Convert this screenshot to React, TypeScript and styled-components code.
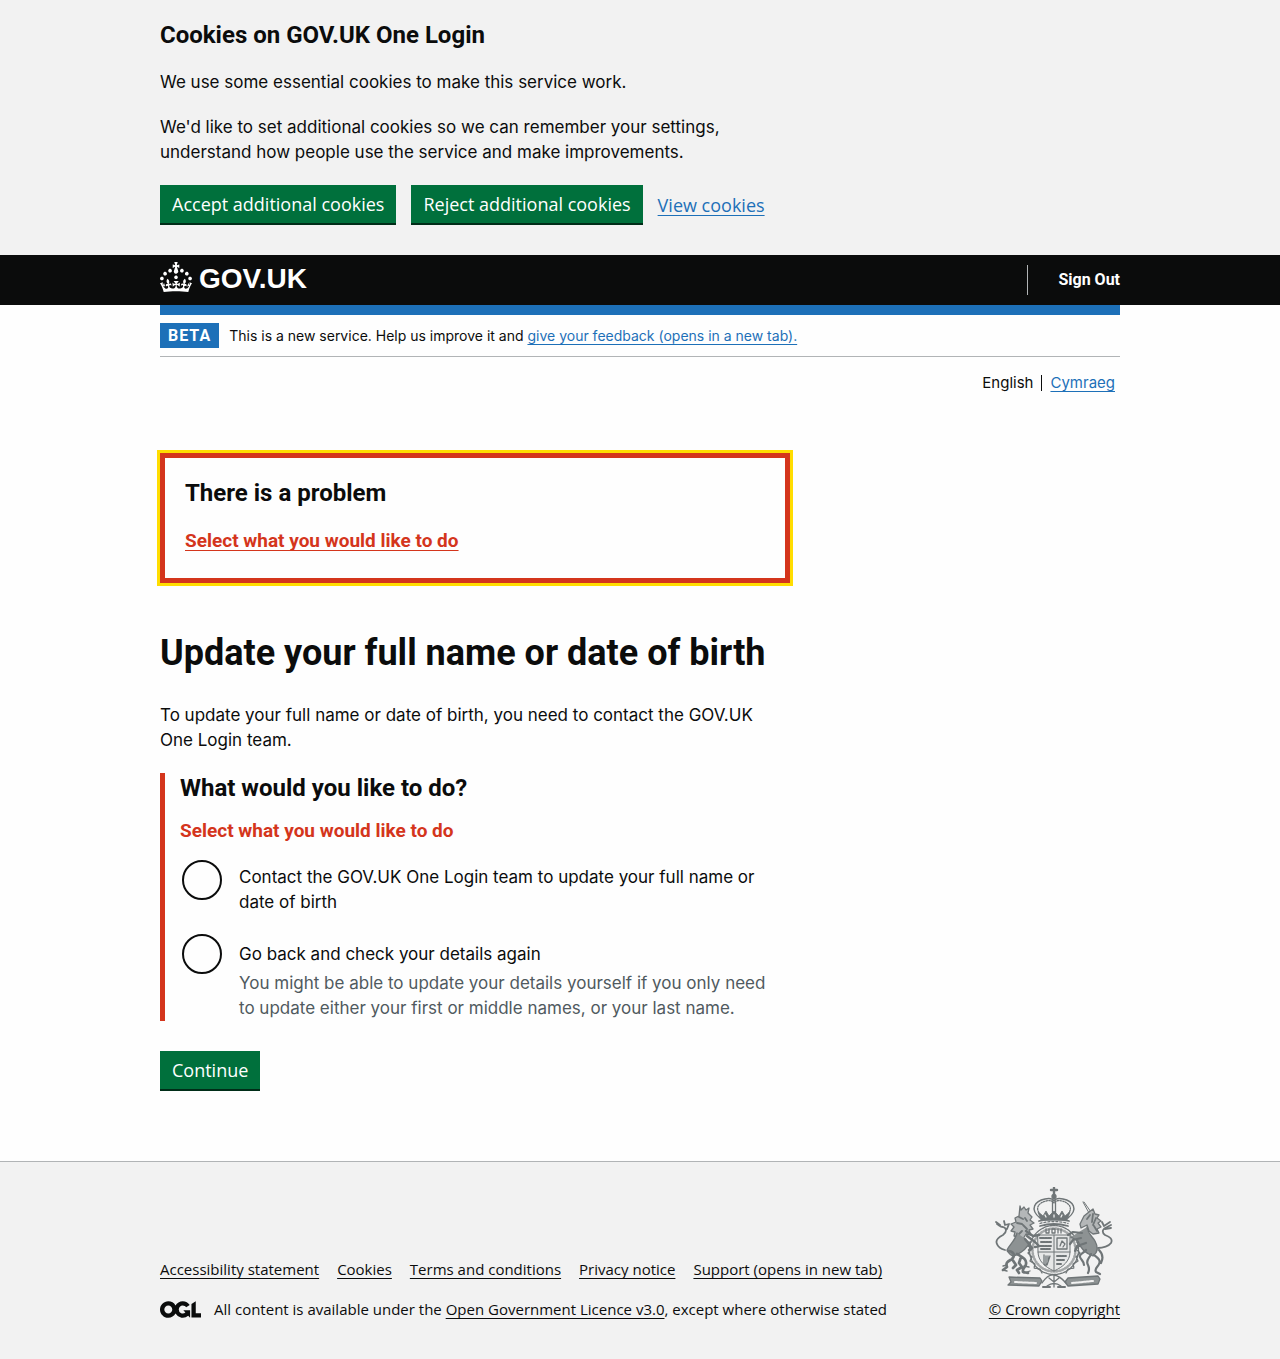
import React from "react";
import styled, { createGlobalStyle } from "styled-components";

const c = {
  ink: "#0b0c0c",
  blue: "#1d70b8",
  green: "#00703c",
  red: "#d4351c",
  yellow: "#ffdd00",
  grey: "#f2f2f2",
  border: "#b1b4b6",
  hint: "#505a5f",
  page: "#fefefe",
};

const boldFamily = `Roboto, "Liberation Sans", Arial, sans-serif`;
const actionFamily = `"Open Sans", "Liberation Sans", Arial, sans-serif`;

const GlobalStyle = createGlobalStyle`
  *, *::before, *::after { box-sizing: border-box; }
  body {
    margin: 0;
    background: ${c.grey};
    color: ${c.ink};
    font-family: Inter, "Liberation Sans", Arial, sans-serif;
    font-size: 17px;
    line-height: 25px;
  }
  h1, h2, p, ul, fieldset, legend { margin: 0; padding: 0; border: 0; }
  ul { list-style: none; }
`;

const Container = styled.div`
  max-width: 960px;
  margin: 0 auto;
`;

const Column = styled.div`
  max-width: 630px;
`;

const Link = styled.a<{ $tone?: "ink" | "inherit" }>`
  color: ${(p) => (p.$tone === "ink" ? c.ink : p.$tone === "inherit" ? "inherit" : c.blue)};
  text-decoration: underline;
  text-decoration-thickness: 1px;
  text-decoration-skip-ink: none;
  text-underline-offset: 3px;
`;

const Heading = styled.h2`
  font: 700 24px/30px ${boldFamily};
`;

const Title = styled.h1`
  font: 700 36px/40px ${boldFamily};
`;

const Button = styled.button`
  padding: 7px 12px 6px;
  border: 0;
  border-bottom: 2px solid #002d18;
  border-radius: 0;
  background: ${c.green};
  color: #fff;
  font: inherit;
  cursor: pointer;
`;

const CookieBanner = styled.section`
  padding: 20px 0 30px;
`;

const CookieText = styled(Column)`
  display: flex;
  flex-direction: column;
  gap: 20px;
  margin-bottom: 20px;
`;

const ButtonRow = styled.div`
  display: flex;
  align-items: center;
  gap: 15px;
  font: 18px/25px ${actionFamily};
`;

const Header = styled.header`
  background: ${c.ink};
  color: #fff;
`;

const HeaderRow = styled(Container)`
  display: flex;
  align-items: center;
  justify-content: space-between;
  height: 50px;
`;

const Logo = styled.a`
  display: flex;
  align-items: flex-start;
  gap: 7px;
  padding-bottom: 2px;
  color: #fff;
  text-decoration: none;
  font: 700 28px/34px "Liberation Sans", Arial, sans-serif;
`;

const HeaderNav = styled.nav`
  padding-left: 30px;
  border-left: 1px solid ${c.border};
  font: 700 16px/30px ${boldFamily};
`;

const SignOut = styled.a`
  color: #fff;
  text-decoration: none;
`;

const Page = styled.div`
  background: ${c.page};
  border-bottom: 1px solid ${c.border};
`;

const PhaseBanner = styled.div`
  display: flex;
  align-items: center;
  gap: 10px;
  padding: 8px 0;
  border-top: 10px solid ${c.blue};
  border-bottom: 1px solid ${c.border};
  font-size: 14px;
`;

const Tag = styled.strong`
  padding: 0 8px;
  background: ${c.blue};
  color: #fff;
  font: 700 16px/25px ${boldFamily};
  letter-spacing: 1px;
`;

const Languages = styled.ul`
  display: flex;
  justify-content: flex-end;
  padding: 18px 5px 0 0;
  font-size: 15px;
  line-height: 16px;
`;

const Language = styled.li`
  & + & {
    margin-left: 8px;
    padding-left: 8px;
    border-left: 1px solid ${c.ink};
  }
`;

const Main = styled(Column).attrs({ as: "main" })`
  padding: 62px 0 70px;
`;

const ErrorSummary = styled.div`
  display: flex;
  flex-direction: column;
  gap: 20px;
  margin-bottom: 50px;
  padding: 20px 20px 25px;
  border: 5px solid ${c.red};
  outline: 3px solid ${c.yellow};
`;

const ErrorList = styled.ul`
  color: ${c.red};
  font: 700 19px/25px ${boldFamily};
`;

const Intro = styled.p`
  margin: 30px 0 20px;
`;

const FormGroup = styled.div`
  margin-bottom: 30px;
  padding-left: 15px;
  border-left: 5px solid ${c.red};
`;

const ErrorMessage = styled.p`
  margin: 15px 0;
  color: ${c.red};
  font: 700 19px/25px ${boldFamily};
`;

const Radios = styled.div`
  display: flex;
  flex-direction: column;
  gap: 10px;
`;

const RadioItem = styled.div`
  display: grid;
  grid-template-columns: 44px 1fr;
  column-gap: 15px;
`;

const Radio = styled.input`
  appearance: none;
  width: 40px;
  height: 40px;
  margin: 2px;
  border: 2px solid ${c.ink};
  border-radius: 50%;
  background: transparent;
  cursor: pointer;
  &:checked {
    background: radial-gradient(${c.ink} 10px, transparent 11px);
  }
`;

const RadioLabel = styled.label`
  align-self: center;
  padding: 7px 0;
`;

const Hint = styled.div`
  grid-column: 2;
  margin-top: -5px;
  padding-right: 15px;
  color: ${c.hint};
`;

const Footer = styled.footer`
  padding: 25px 0 40px;
  font: 15px/20px ${actionFamily};
`;

const FooterRow = styled(Container)`
  display: flex;
  align-items: flex-end;
  justify-content: space-between;
`;

const FooterLinks = styled.ul`
  display: flex;
  flex-wrap: wrap;
  gap: 18px;
  margin-bottom: 20px;
`;

const Licence = styled.div`
  display: flex;
  align-items: center;
  gap: 13px;
`;

const Copyright = styled.div`
  display: flex;
  flex-direction: column;
  align-items: center;
  gap: 10px;
`;

const Crown = () => (
  <svg width="32" height="30" viewBox="0 0 32 30" fill="currentColor" aria-hidden="true">
    <path d="M22.6 10.4c-1 .4-2-.1-2.4-1-.4-.9.1-2 1-2.4.9-.4 2 .1 2.4 1s-.1 2-1 2.4m-5.9 6.7c-.9.4-2-.1-2.4-1-.4-.9.1-2 1-2.4.9-.4 2 .1 2.4 1s-.1 2-1 2.4m10.8-3.7c-1 .4-2-.1-2.4-1-.4-.9.1-2 1-2.4.9-.4 2 .1 2.4 1s0 2-1 2.4m3.3 4.8c-1 .4-2-.1-2.4-1-.4-.9.1-2 1-2.4.9-.4 2 .1 2.4 1s-.1 2-1 2.4M17 4.7l2.3 1.2V2.5l-2.3.7-.2-.2.9-3h-3.4l.9 3-.2.2c-.1.1-2.3-.7-2.3-.7v3.4L15 4.7c.1.1.1.2.2.2l-1.3 4c-.1.2-.1.4-.1.6 0 1.1.8 2 1.9 2.2h.7c1-.2 1.9-1.1 1.9-2.1 0-.2 0-.4-.1-.6l-1.3-4c-.1-.2 0-.2.1-.3m-7.6 5.7c.9.4 2-.1 2.4-1 .4-.9-.1-2-1-2.4-.9-.4-2 .1-2.4 1s0 2 1 2.4m-5 3c.9.4 2-.1 2.4-1 .4-.9-.1-2-1-2.4-.9-.4-2 .1-2.4 1s.1 2 1 2.4m-3.2 4.8c.9.4 2-.1 2.4-1 .4-.9-.1-2-1-2.4-.9-.4-2 .1-2.4 1s0 2 1 2.4m14.8 11c4.4 0 8.6.3 12.3.8 1.1-4.5 2.4-7 3.7-8.8l-2.5-.9c.2 1.3.3 1.9 0 2.7-.4-.4-.8-1.1-1.1-2.3l-1.2 4c.7-.5 1.3-.8 2-.9-1.1 2.5-2.6 3.1-3.5 3-1.1-.2-1.7-1.2-1.5-2.1.3-1.2 1.5-1.5 2.1-.1 1.1-2.3-.8-3-2-2.3 1.9-1.9 2.1-3.5.6-5.6-2.1 1.6-2.1 3.2-1.2 5.5-1.2-1.4-3.2-.6-2.5 1.6.9-1.4 2.1-.5 1.9.8-.2 1.1-1.7 2.1-3.5 1.9-2.7-.2-2.9-2.1-2.9-3.6.7-.1 1.9.5 2.9 1.9l.4-4.3c-1.1 1.1-2.1 1.4-3.2 1.4.4-1.2 2.1-3 2.1-3h-5.4s1.7 1.9 2.1 3c-1.1 0-2.1-.2-3.2-1.4l.4 4.3c1-1.4 2.2-2 2.9-1.9-.1 1.5-.2 3.4-2.9 3.6-1.9.2-3.4-.8-3.5-1.9-.2-1.3 1-2.2 1.9-.8.7-2.3-1.2-3-2.5-1.6.9-2.2.9-3.9-1.2-5.5-1.5 2-1.3 3.7.6 5.6-1.2-.7-3.1 0-2 2.3.6-1.4 1.8-1.1 2.1.1.2.9-.3 1.9-1.5 2.1-.9.2-2.4-.5-3.5-3 .6 0 1.2.3 2 .9l-1.2-4c-.3 1.1-.7 1.9-1.1 2.3-.3-.8-.2-1.4 0-2.7l-2.9.9C1.3 23 2.6 25.5 3.7 30c3.7-.5 7.9-.8 12.3-.8" />
  </svg>
);

const OglLogo = () => (
  <svg width="41" height="17" viewBox="0 0 483.2 195.7" fill="currentColor" aria-hidden="true">
    <path d="M421.5 142.8V.1l-50.7 32.3v161.1h112.4v-50.7zm-122.3-9.6A47.12 47.12 0 0 1 221 97.8c0-26 21.1-47.1 47.1-47.1 16.7 0 31.4 8.7 39.7 21.8l42.7-27.2A97.63 97.63 0 0 0 268.1 0c-36.5 0-68.3 20.1-85.1 49.7A98 98 0 0 0 97.8 0C43.9 0 0 43.9 0 97.8s43.9 97.8 97.8 97.8c36.5 0 68.3-20.1 85.1-49.7a97.76 97.76 0 0 0 149.6 25.4l19.4 22.2h3v-87.8h-80l24.3 27.5zM97.8 145c-26 0-47.1-21.1-47.1-47.1s21.1-47.1 47.1-47.1 47.1 21.1 47.1 47.1S123.8 145 97.8 145" />
  </svg>
);

const Crest = () => (
  <svg width="118" height="102" viewBox="0 0 118 102" fill="none" stroke="#6f7577" strokeWidth="1.3" strokeLinecap="round" strokeLinejoin="round" aria-hidden="true">
    {/* royal crown */}
    <path d="M59 .8v7M56 3h6" strokeWidth="2.4" />
    <circle cx="59" cy="9.5" r="2" fill="#6f7577" />
    <path d="M45 31C34 22 40 14 50 12c5-1 8 0 9 2 1-2 4-3 9-2 10 2 16 10 5 19" strokeWidth="1.4" />
    <path d="M47 29C39 22 43 16 51 14c4-1 7 0 8 2 1-2 4-3 8-2 8 2 12 8 4 15" strokeDasharray="1.3 1.3" />
    <path d="M57.5 14v13M60.5 14v13" />
    <path d="M46 33l-3-8 5 4 3-5 3 5 5-5 5 5 3-5 3 5 5-4-3 8z" fill="#6f7577" strokeWidth=".8" />
    <path d="M50 28l1 2M67 28l-1 2M59 28v2" stroke="#f2f2f2" />
    <path d="M44 34q15-4 30 0M45 39q14-4 28 0" strokeWidth="1.8" />
    <path d="M45 36.5q14-4 28 0" strokeDasharray="2 2" />
    {/* garter */}
    <circle cx="59" cy="63" r="24.5" strokeDasharray="2 1" strokeWidth="1.3" />
    <circle cx="59" cy="63" r="21.5" strokeDasharray="1 2" strokeWidth="2.6" opacity=".6" />
    <path d="M51 42v4h3v-4M57 42v4h3v-4zM63 42v4M66 42v4" />
    {/* quartered shield */}
    <path d="M43 48h32v17c0 9-7 15-16 19-9-4-16-10-16-19z" fill="#e6e7e7" strokeWidth="1" />
    <path d="M59 48v36M43 65h32" strokeWidth="1" />
    <path d="M45 51h11M46 55h10M45 59h11M46 62h9M62 69h9M62 73h8M62 77h4" strokeDasharray="4 1 2 1" strokeWidth="2" />
    <path d="M62 51h10v11h-10zM65 59l2-5 3 3-2 3M49 68v8q0 3 3 2l3-9M51 69v8M53 69v6" />
    <path d="M36 55l-3 4 4 3-4 4 4 4-2 4 5 3-1 4 6 1 2 4M82 55l3 4-4 3 4 4-4 4 2 4-5 3 1 4-6 1-2 4" strokeDasharray="2 1" />
    {/* lion */}
    <path d="M25 19l1 4 3-3 2 3 3-2-1 5 4 4-2 3 4 3-4 2 3 4-4 1 2 5-5-1-3 5-5-2-4-1 1-4-4-1 3-4-3-3 5-2-1-4 4-2z" fill="#b4b7b8" />
    <path d="M24 30l4 2M22 36l5 1M28 38l4 4M30 31l2 3M27 44l-3 3" strokeWidth="1.8" />
    <path d="M22 46c-2 8-7 11-10 17 2 4 5 6 7 6 7-3 13-7 16-14" fill="#8d9293" />
    <path d="M31 44l7 5 6-1M32 49l8 6 4 4-4 1M30 52l7 9-3 2" strokeWidth="2.4" />
    <path d="M10 63c-4-1-7-3-8-6-2-4 2-7 6-9 4-3 4-7 0-8-3 0-4-2-6-3M9 34l1 4 4-1-2 5M1 35l4 3" strokeWidth="1.8" />
    <path d="M13 64c5 0 8 4 4 8-3 2-7 3-5 8l-4 3M22 67c5 3 10 5 9 10 0 3-4 4-3 8l5 1M17 72l4 6-3 3M26 70l-2 6 3 4-5 3 2 3" strokeWidth="2.7" />
    <path d="M12 84l-4-1M8 79l4-1M29 86l6-2M34 80l-5-1" />
    {/* unicorn */}
    <path d="M88 15l6 11M89 15l7 10" strokeWidth="1" />
    <path d="M85 37l4-8 5-4 4-3 2 5 4 1-2 3 4 3-3 2 3 4-4 2 2 4-6 1-4-3-2-6-6 3z" fill="#b4b7b8" />
    <path d="M95 28l-3 4M98 27l-1 8M101 31l-3 7M99 39l3 5" strokeWidth="1.8" />
    <path d="M92 40c1 7 5 9 8 14 4 7 2 12-2 15-8-3-13-8-15-15l-7-4" fill="#8d9293" />
    <path d="M87 46l-9-1-5 3M86 51l-8 2-3 4M91 56l-9 3-2 5" strokeWidth="2.2" />
    <path d="M103 61c5 0 11-2 13-5 2-4-1-6-6-8-4-3-2-7 2-8l4-2M107 35l2 4 6-4M110 42l6-1" strokeWidth="1.8" />
    <path d="M99 68c4 3 7 5 5 9-1 3-5 4-3 8l4 2M91 63c-3 4-7 4-6 7 1 3 4 4 4 8M96 67c-1 4-6 6-3 11 1 3 2 4 0 8M104 63c4 4 4 9 2 13" strokeWidth="2.2" />
    {/* motto scroll */}
    <path d="M14 90l31 1 2 3-3 5-31-1 3-3z" fill="#8d9293" />
    <path d="M73 91l30-2 2 3-2 5-30 2-3-4z" fill="#8d9293" />
    <path d="M20 95l21 1M77 96l21-2" stroke="#f2f2f2" strokeDasharray="2 1" strokeWidth="2" />
    <path d="M47 96q6-9 12-8t12 8M52 99q7-5 14 0M59 88v12M54 91l5 4 5-4" />
    <path d="M48 100h7M63 100h7" strokeWidth="2" />
  </svg>
);

const footerLinks = [
  "Accessibility statement",
  "Cookies",
  "Terms and conditions",
  "Privacy notice",
  "Support (opens in new tab)",
];

export default function App() {
  return (
    <>
      <GlobalStyle />
      <CookieBanner aria-label="Cookies on GOV.UK One Login">
        <Container>
          <CookieText>
            <Heading>Cookies on GOV.UK One Login</Heading>
            <p>We use some essential cookies to make this service work.</p>
            <p>
              We'd like to set additional cookies so we can remember your settings, understand how
              people use the service and make improvements.
            </p>
          </CookieText>
          <ButtonRow>
            <Button type="button">Accept additional cookies</Button>
            <Button type="button">Reject additional cookies</Button>
            <Link href="#cookies">View cookies</Link>
          </ButtonRow>
        </Container>
      </CookieBanner>

      <Header>
        <HeaderRow>
          <Logo href="#home">
            <Crown />
            GOV.UK
          </Logo>
          <HeaderNav>
            <SignOut href="#sign-out">Sign Out</SignOut>
          </HeaderNav>
        </HeaderRow>
      </Header>

      <Page>
        <Container>
          <PhaseBanner>
            <Tag>BETA</Tag>
            <span>
              This is a new service. Help us improve it and{" "}
              <Link href="#feedback">give your feedback (opens in a new tab).</Link>
            </span>
          </PhaseBanner>
          <Languages>
            <Language>English</Language>
            <Language>
              <Link href="#cy">Cymraeg</Link>
            </Language>
          </Languages>

          <Main>
            <ErrorSummary role="alert">
              <Heading>There is a problem</Heading>
              <ErrorList>
                <li>
                  <Link href="#contact" $tone="inherit">
                    Select what you would like to do
                  </Link>
                </li>
              </ErrorList>
            </ErrorSummary>

            <Title>Update your full name or date of birth</Title>
            <Intro>
              To update your full name or date of birth, you need to contact the GOV.UK One Login
              team.
            </Intro>

            <form>
              <FormGroup>
                <fieldset>
                  <legend>
                    <Heading>What would you like to do?</Heading>
                  </legend>
                  <ErrorMessage>Select what you would like to do</ErrorMessage>
                  <Radios>
                    <RadioItem>
                      <Radio type="radio" name="next" id="contact" />
                      <RadioLabel htmlFor="contact">
                        Contact the GOV.UK One Login team to update your full name or date of birth
                      </RadioLabel>
                    </RadioItem>
                    <RadioItem>
                      <Radio type="radio" name="next" id="check" aria-describedby="check-hint" />
                      <RadioLabel htmlFor="check">Go back and check your details again</RadioLabel>
                      <Hint id="check-hint">
                        You might be able to update your details yourself if you only need to
                        update either your first or middle names, or your last name.
                      </Hint>
                    </RadioItem>
                  </Radios>
                </fieldset>
              </FormGroup>
              <ButtonRow>
                <Button type="button">Continue</Button>
              </ButtonRow>
            </form>
          </Main>
        </Container>
      </Page>

      <Footer>
        <FooterRow>
          <div>
            <FooterLinks>
              {footerLinks.map((label) => (
                <li key={label}>
                  <Link href="#footer" $tone="ink">
                    {label}
                  </Link>
                </li>
              ))}
            </FooterLinks>
            <Licence>
              <OglLogo />
              <span>
                All content is available under the{" "}
                <Link href="#licence" $tone="ink">
                  Open Government Licence v3.0
                </Link>
                , except where otherwise stated
              </span>
            </Licence>
          </div>
          <Copyright>
            <Crest />
            <Link href="#copyright" $tone="ink">
              © Crown copyright
            </Link>
          </Copyright>
        </FooterRow>
      </Footer>
    </>
  );
}
